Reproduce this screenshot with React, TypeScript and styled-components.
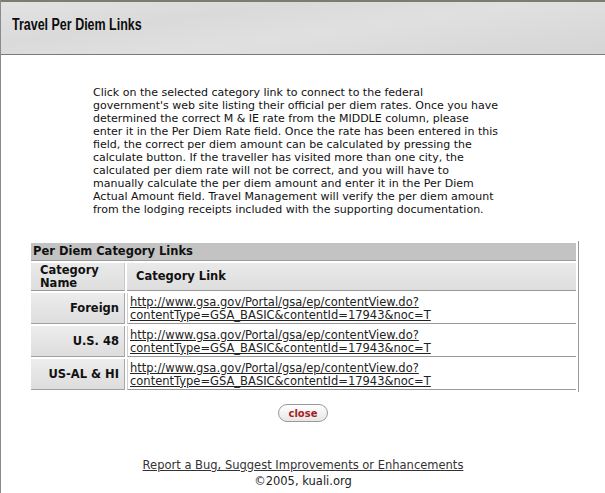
import React from 'react';
import styled, { createGlobalStyle } from 'styled-components';

const GlobalStyle = createGlobalStyle`
  body {
    margin: 0;
    background: #ffffff;
    font-family: "DejaVu Sans", Verdana, sans-serif;
  }
`;

const Page = styled.div`
  min-height: 493px;
  border-left: 1px solid #8a8a8a;
  box-sizing: border-box;
`;

const Header = styled.div`
  height: 55px;
  border-top: 2px solid #7b7d72;
  border-bottom: 1px solid #7a7a7a;
  background: linear-gradient(172deg, #e2e2e2 0%, #dadada 30%, #e0e0e0 55%, #d5d5d5 100%);
  display: flex;
  align-items: center;
  padding: 0 0 7px 11px;
  box-sizing: border-box;
`;

const Title = styled.h1`
  margin: 0;
  font-family: "Liberation Sans", Arial, sans-serif;
  font-size: 16px;
  font-weight: bold;
  color: #0c0c0c;
  transform: scaleX(0.78);
  transform-origin: left center;
  white-space: nowrap;
`;

const Intro = styled.div`
  margin: 31px 0 0 92px;
  font-size: 11px;
  line-height: 13px;
  color: #111;
`;

const IntroLine = styled.span`
  display: block;
  white-space: nowrap;
`;

const LinksTable = styled.table`
  margin: 25px 0 0 28px;
  width: 550px;
  border-collapse: separate;
  border-spacing: 2px;
  border-right: 1px solid #9a9a9a;
  font-size: 11.5px;
  color: #111;
`;

const TitleCell = styled.th`
  background: #c3c3c3;
  border-bottom: 1px solid #9c9c9c;
  text-align: left;
  padding: 1px 2px 2px 2px;
  height: 14px;
  line-height: 14px;
  font-weight: bold;
`;

const HeadCell = styled.th<{ $narrow?: boolean }>`
  background: linear-gradient(#e9e9e9, #dedede);
  border-bottom: 1px solid #9a9a9a;
  border-right: ${(p) => (p.$narrow ? '1px solid #c8c8c8' : 'none')};
  text-align: left;
  font-weight: bold;
  padding: 1px 4px 1px 9px;
  height: 25px;
  width: ${(p) => (p.$narrow ? '80px' : 'auto')};
  line-height: 12.5px;
`;

const LabelCell = styled.th`
  background: linear-gradient(#ededed, #dddddd);
  border-right: 1px solid #a8a8a8;
  border-bottom: 1px solid #a0a0a0;
  text-align: right;
  font-weight: bold;
  padding: 2px 5px 2px 4px;
  height: 26px;
`;

const LinkCell = styled.td`
  border-bottom: 1px solid #9a9a9a;
  border-left: 1px solid #d0d0d0;
  padding: 2px 2px 1px 2px;
  line-height: 13px;
`;

const DocLink = styled.a`
  color: #222;
  text-decoration: underline;
`;

const ButtonRow = styled.div`
  display: flex;
  justify-content: center;
  margin-top: 12px;
`;

const CloseButton = styled.button`
  font-family: "DejaVu Sans", Verdana, sans-serif;
  font-size: 10px;
  font-weight: bold;
  color: #a42121;
  background: linear-gradient(#ffffff, #e6e6e6);
  border: 1px solid #9a9a9a;
  border-radius: 9px;
  padding: 1px 10px;
  height: 18px;
  line-height: 13px;
  cursor: pointer;
`;

const Footer = styled.div`
  margin-top: 35px;
  text-align: center;
  font-size: 11.5px;
  line-height: 16px;
  color: #222;
`;

const FooterLink = styled.a`
  color: #333;
  text-decoration: underline;
`;

const introLines = [
  'Click on the selected category link to connect to the federal',
  "government's web site listing their official per diem rates. Once you have",
  'determined the correct M & IE rate from the MIDDLE column, please',
  'enter it in the Per Diem Rate field. Once the rate has been entered in this',
  'field, the correct per diem amount can be calculated by pressing the',
  'calculate button. If the traveller has visited more than one city, the',
  'calculated per diem rate will not be correct, and you will have to',
  'manually calculate the per diem amount and enter it in the Per Diem',
  'Actual Amount field. Travel Management will verify the per diem amount',
  'from the lodging receipts included with the supporting documentation.',
];

const categories = ['Foreign', 'U.S. 48', 'US-AL & HI'];

export default function App() {
  return (
    <Page>
      <GlobalStyle />
      <Header>
        <Title>Travel Per Diem Links</Title>
      </Header>

      <Intro>
        {introLines.map((line) => (
          <IntroLine key={line}>{line}</IntroLine>
        ))}
      </Intro>

      <LinksTable>
        <tbody>
          <tr>
            <TitleCell colSpan={2}>Per Diem Category Links</TitleCell>
          </tr>
          <tr>
            <HeadCell $narrow>
              Category
              <br />
              Name
            </HeadCell>
            <HeadCell>Category Link</HeadCell>
          </tr>
          {categories.map((cat) => (
            <tr key={cat}>
              <LabelCell>{cat}</LabelCell>
              <LinkCell>
                <DocLink href="#">
                  http://www.gsa.gov/Portal/gsa/ep/contentView.do?
                  <br />
                  contentType=GSA_BASIC&amp;contentId=17943&amp;noc=T
                </DocLink>
              </LinkCell>
            </tr>
          ))}
        </tbody>
      </LinksTable>

      <ButtonRow>
        <CloseButton>close</CloseButton>
      </ButtonRow>

      <Footer>
        <FooterLink href="#">Report a Bug, Suggest Improvements or Enhancements</FooterLink>
        <br />
        ©2005, kuali.org
      </Footer>
    </Page>
  );
}
